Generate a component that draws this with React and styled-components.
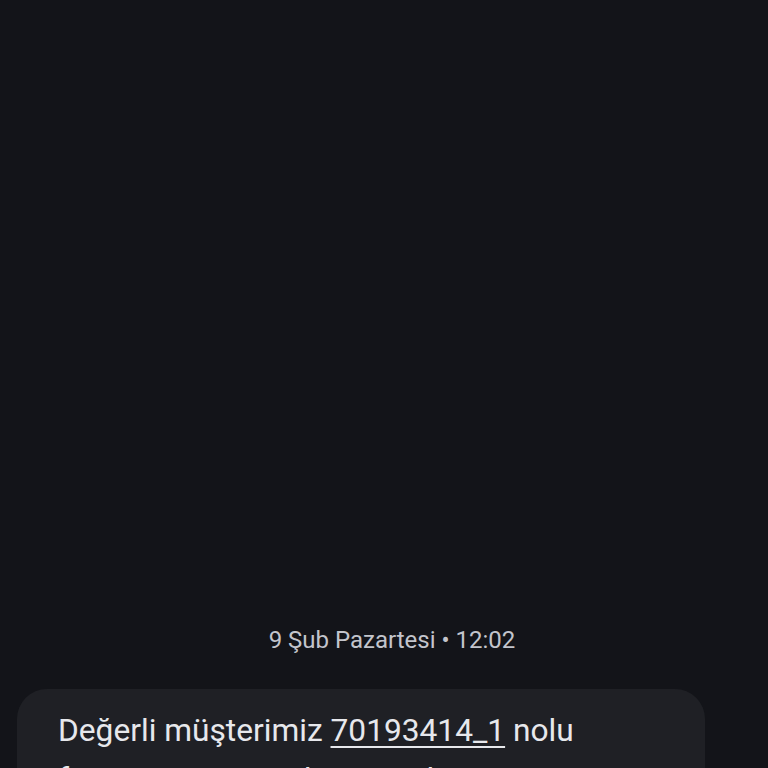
import React from 'react'
import styled, { createGlobalStyle } from 'styled-components';

const GlobalStyle = createGlobalStyle`
  html, body {
    margin: 0;
    padding: 0;
    background: #131419;
  }
`;

const Screen = styled.div`
  width: 768px;
  height: 768px;
  overflow: hidden;
  background: #131419;
  display: flex;
  flex-direction: column;
  padding-top: 623px;
  box-sizing: border-box;
  font-family: Roboto, "Noto Sans", sans-serif;
`;

const DateStamp = styled.div`
  padding-left: 16px;
  text-align: center;
  color: #c3c5cc;
  font-size: 24px;
  line-height: 34px;
`;

const Bubble = styled.div`
  margin: 32px 63px 0 17px;
  background: #1f2025;
  border-radius: 30px;
  padding: 17px 40px 24px 41px;
  color: #e7e8ec;
  font-size: 31.7px;
  line-height: 49px;
`;

const Ref = styled.span`
  text-decoration: underline;
  text-decoration-thickness: 2px;
  text-underline-offset: 5px;
`;

const App = () => {
  return (
    <Screen>
      <GlobalStyle />
      <DateStamp>9 Şub Pazartesi • 12:02</DateStamp>
      <Bubble>
        Değerli müşterimiz <Ref>70193414_1</Ref> nolu faturanızın son ödeme tarihi yaklaşmaktadır.
      </Bubble>
    </Screen>
  )
}

export default App
